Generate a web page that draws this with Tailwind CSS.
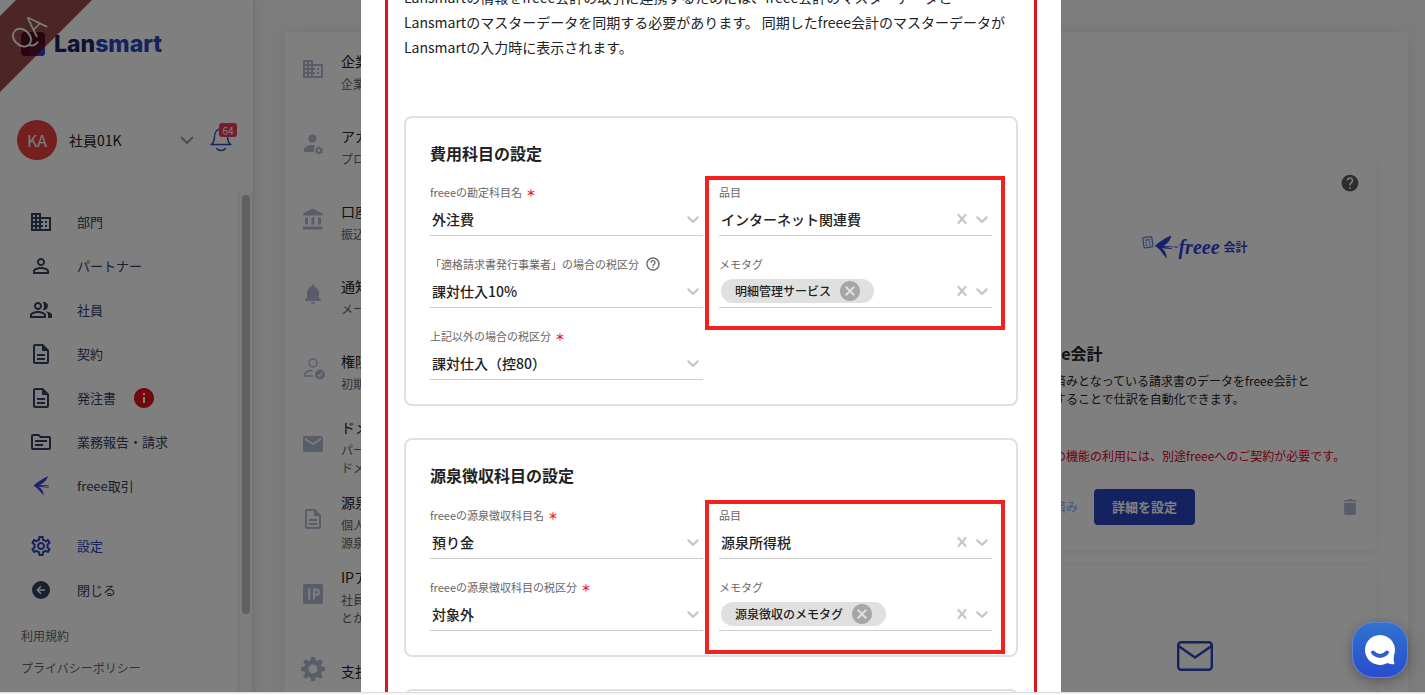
<!DOCTYPE html>
<html lang="ja">
<head>
    <meta charset="UTF-8">
    <meta name="viewport" content="width=device-width, initial-scale=1.0">
    <title>設定 - Lansmart</title>
    <script src="https://cdn.jsdelivr.net/npm/@tailwindcss/browser@4"></script>
</head>
<body class="flex h-screen flex-col overflow-hidden bg-[#f7f7f7] font-['Noto_Sans_CJK_JP',sans-serif] text-[#222]">

    <!-- Icon sprite -->
    <svg class="hidden">
        <symbol id="i-domain" viewBox="0 0 24 24"><path d="M12 7V3H2v18h20V7H12zM6 19H4v-2h2v2zm0-4H4v-2h2v2zm0-4H4V9h2v2zm0-4H4V5h2v2zm4 12H8v-2h2v2zm0-4H8v-2h2v2zm0-4H8V9h2v2zm0-4H8V5h2v2zm10 12h-8v-2h2v-2h-2v-2h2v-2h-2V9h8v10zm-2-8h-2v2h2v-2zm0 4h-2v2h2v-2z"/></symbol>
        <symbol id="i-person" viewBox="0 0 24 24"><path d="M12 5.9c1.16 0 2.1.94 2.1 2.1s-.94 2.1-2.1 2.1S9.9 9.16 9.9 8s.94-2.1 2.1-2.1m0 9c2.97 0 6.1 1.46 6.1 2.1v1.1H5.9V17c0-.64 3.13-2.1 6.1-2.1M12 4C9.79 4 8 5.79 8 8s1.79 4 4 4 4-1.79 4-4-1.79-4-4-4zm0 9c-2.67 0-8 1.34-8 4v3h16v-3c0-2.66-5.33-4-8-4z"/></symbol>
        <symbol id="i-people" viewBox="0 0 24 24"><path d="M16.67 13.13C18.04 14.06 19 15.32 19 17v3h4v-3c0-2.18-3.57-3.47-6.33-3.87zM15 12c2.21 0 4-1.79 4-4s-1.79-4-4-4c-.47 0-.91.1-1.33.24C14.5 5.27 15 6.58 15 8s-.5 2.73-1.33 3.76c.42.14.86.24 1.33.24zM9 12c2.21 0 4-1.79 4-4s-1.79-4-4-4-4 1.79-4 4 1.79 4 4 4zm0-6c1.1 0 2 .9 2 2s-.9 2-2 2-2-.9-2-2 .9-2 2-2zm0 7c-2.67 0-8 1.34-8 4v3h16v-3c0-2.66-5.33-4-8-4zm6 5H3v-.99C3.2 16.29 6.3 15 9 15s5.8 1.29 6 2v1z"/></symbol>
        <symbol id="i-doc" viewBox="0 0 24 24"><path d="M8 16h8v2H8zm0-4h8v2H8zm6-10H6c-1.1 0-2 .9-2 2v16c0 1.1.89 2 1.99 2H18c1.1 0 2-.9 2-2V8l-6-6zm4 18H6V4h7v5h5v11z"/></symbol>
        <symbol id="i-topic" viewBox="0 0 24 24"><path d="M20 6h-8l-2-2H4c-1.1 0-1.99.9-1.99 2L2 18c0 1.1.9 2 2 2h16c1.1 0 2-.9 2-2V8c0-1.1-.9-2-2-2zm0 12H4V6h5.17l2 2H20v10zm-2-6H6v-2h12v2zm-4 4H6v-2h8v2z"/></symbol>
        <symbol id="i-swallow" viewBox="0 0 24 24"><path d="M19 2.300C13 5 8 8.200 4.500 11.700c4 2 6.500 6 10.300 9.800-.3-3.500-1.800-6.500-5-8.700l10 .9v-.6l-8.500-1.300 8.500-.1v-.6l-8.800-.1C14.500 9 18 6.500 19 2.300z"/></symbol>
        <symbol id="i-settings" viewBox="0 0 24 24"><path d="M19.43 12.98c.04-.32.07-.64.07-.98 0-.34-.03-.66-.07-.98l2.11-1.65c.19-.15.24-.42.12-.64l-2-3.460c-.09-.16-.26-.25-.44-.25-.06 0-.12.01-.17.03l-2.490 1c-.52-.4-1.080-.73-1.690-.98l-.38-2.650C14.460 2.180 14.250 2 14 2h-4c-.25 0-.46.18-.49.42l-.38 2.650c-.61.25-1.170.59-1.690.98l-2.490-1c-.06-.02-.12-.03-.18-.03-.17 0-.34.09-.43.25l-2 3.460c-.13.22-.07.49.12.64l2.110 1.650c-.04.32-.07.65-.07.98 0 .33.03.66.07.98l-2.110 1.650c-.19.15-.24.42-.12.64l2 3.460c.09.16.26.25.44.25.06 0 .12-.01.17-.03l2.490-1c.52.4 1.080.73 1.690.98l.38 2.650c.03.24.24.42.49.42h4c.25 0 .46-.18.49-.42l.38-2.650c.61-.25 1.170-.59 1.690-.98l2.490 1c.06.02.12.03.18.03.17 0 .34-.09.43-.25l2-3.460c.12-.22.07-.49-.12-.64l-2.110-1.650zm-1.980-1.710c.04.31.05.52.05.73 0 .21-.02.43-.05.73l-.14 1.130.89.7 1.080.84-.7 1.210-1.270-.51-1.040-.42-.9.68c-.43.32-.84.56-1.250.73l-1.060.43-.16 1.130-.2 1.350h-1.400l-.19-1.350-.16-1.130-1.060-.43c-.43-.18-.83-.41-1.230-.71l-.91-.7-1.060.43-1.270.51-.7-1.210 1.080-.84.89-.7-.14-1.130c-.03-.31-.05-.54-.05-.74s.02-.43.05-.73l.14-1.130-.89-.7-1.080-.84.7-1.210 1.270.51 1.040.42.9-.68c.43-.32.84-.56 1.250-.73l1.060-.43.16-1.130.2-1.350h1.390l.19 1.350.16 1.130 1.060.43c.43.18.83.41 1.230.71l.91.7 1.060-.43 1.270-.51.7 1.210-1.070.85-.89.7.14 1.130zM12 8c-2.210 0-4 1.790-4 4s1.790 4 4 4 4-1.790 4-4-1.790-4-4-4zm0 6c-1.100 0-2-.9-2-2s.9-2 2-2 2 .9 2 2-.9 2-2 2z"/></symbol>
        <symbol id="i-back" viewBox="0 0 24 24"><circle cx="12" cy="12" r="9"/><path d="M16 12H8.500M12 8.300 8.300 12l3.700 3.700" fill="none" stroke="#fff" stroke-width="1.400"/></symbol>
        <symbol id="i-info" viewBox="0 0 24 24"><path d="M12 2C6.480 2 2 6.480 2 12s4.480 10 10 10 10-4.480 10-10S17.520 2 12 2zm1 15h-2v-6h2v6zm0-8h-2V7h2v2z"/></symbol>
        <symbol id="i-help" viewBox="0 0 24 24"><path d="M12 2C6.480 2 2 6.480 2 12s4.480 10 10 10 10-4.480 10-10S17.520 2 12 2zm1 17h-2v-2h2v2zm2.070-7.750l-.9.92C13.450 12.900 13 13.500 13 15h-2v-.5c0-1.100.45-2.100 1.170-2.830l1.240-1.260c.37-.36.59-.86.59-1.410 0-1.100-.9-2-2-2s-2 .9-2 2H8c0-2.210 1.790-4 4-4s4 1.790 4 4c0 .88-.36 1.680-.93 2.250z"/></symbol>
        <symbol id="i-help-o" viewBox="0 0 24 24"><path d="M11 18h2v-2h-2v2zm1-16C6.480 2 2 6.480 2 12s4.480 10 10 10 10-4.480 10-10S17.520 2 12 2zm0 18c-4.410 0-8-3.590-8-8s3.590-8 8-8 8 3.590 8 8-3.590 8-8 8zm0-14c-2.210 0-4 1.790-4 4h2c0-1.100.9-2 2-2s2 .9 2 2c0 2-3 1.750-3 5h2c0-2.250 3-2.500 3-5 0-2.210-1.790-4-4-4z"/></symbol>
        <symbol id="i-person-gear" viewBox="0 0 24 24"><circle cx="11.500" cy="6.500" r="4"/><path d="M14 13.200c-.8-.1-1.700-.2-2.500-.2C7 13 3 15 3 17.500V20h10.200c-.8-2-.6-4.800.8-6.800z"/><g fill="none" stroke="currentColor"><circle cx="18" cy="18.500" r="2.300" stroke-width="1.800"/><path d="M18 14.500v1.200M18 21.300v1.200M14.500 16.500l1.100.6M20.400 19.900l1.100.6M14.500 20.500l1.100-.6M20.400 17.100l1.100-.6" stroke-width="1.800"/></g></symbol>
        <symbol id="i-bank" viewBox="0 0 24 24"><path d="M4 10.500v7h3v-7H4zm6.500 0v7h3v-7h-3zM2 22.500h19.500v-3H2v3zm15-12v7h3v-7h-3zM11.750 1.500 2 6.500v2h19.500v-2l-9.750-5z"/></symbol>
        <symbol id="i-bell" viewBox="0 0 24 24"><path d="M12 22c1.100 0 2-.9 2-2h-4c0 1.100.89 2 2 2zm6-6v-5c0-3.070-1.640-5.640-4.500-6.320V4c0-.83-.67-1.500-1.500-1.500s-1.500.67-1.500 1.500v.68C7.630 5.360 6 7.920 6 11v5l-2 2v1h16v-1l-2-2z"/></symbol>
        <symbol id="i-person-check" viewBox="0 0 24 24"><g fill="none" stroke="currentColor" stroke-width="1.500"><circle cx="12" cy="6" r="4"/><path d="M12.500 19H3.800v-1.500c0-2.300 3.500-4.200 7.700-4.300"/></g><circle cx="19" cy="17.500" r="5"/><path d="m16.700 17.600 1.700 1.700 3-3.600" fill="none" stroke="#fff" stroke-width="1.300"/></symbol>
        <symbol id="i-mail" viewBox="0 0 24 24"><path d="M20 4H4c-1.100 0-1.990.9-1.990 2L2 18c0 1.100.9 2 2 2h16c1.100 0 2-.9 2-2V6c0-1.100-.9-2-2-2zm0 4l-8 5-8-5V6l8 5 8-5v2z"/></symbol>
        <symbol id="i-ip" viewBox="0 0 24 24"><rect x="2" y="2" width="20" height="20" rx="2"/><path d="M8.300 6.500v11M13 17.500v-10h2.200a2.400 2.400 0 0 1 0 5.300H13" fill="none" stroke="#fff" stroke-width="2"/></symbol>
        <symbol id="i-gear" viewBox="0 0 24 24"><path fill-rule="evenodd" d="M10.300 2h3.400l.4 2.700 1.700.7L18 3.800 20.300 6l-1.700 2.200.7 1.700 2.700.4v3.400l-2.700.4-.7 1.700 1.700 2.200-2.300 2.300-2.200-1.700-1.700.7-.4 2.700h-3.400l-.4-2.700-1.700-.7L6 20.300 3.700 18l1.700-2.200-.7-1.700-2.700-.4v-3.400l2.700-.4.7-1.700L3.700 6 6 3.800l2.200 1.600 1.700-.7zM12 8.300a3.700 3.700 0 1 0 0 7.400 3.700 3.700 0 0 0 0-7.400z"/></symbol>
        <symbol id="i-trash" viewBox="0 0 24 24"><path d="M5 19.500c0 1.100.9 2 2 2h10c1.100 0 2-.9 2-2V7H5v12.500zM19.500 3.500h-4L14 2.300h-4L8.500 3.500h-4V5.500h15z"/></symbol>
        <symbol id="i-chevron" viewBox="0 0 20 20"><path d="M4.516 7.548c.436-.446 1.043-.481 1.576 0L10 11.295l3.908-3.747c.533-.481 1.141-.446 1.574 0 .436.445.408 1.197 0 1.615-.406.418-4.695 4.502-4.695 4.502-.217.223-.502.335-.787.335s-.57-.112-.789-.335c0 0-4.287-4.084-4.695-4.502s-.436-1.170 0-1.615z"/></symbol>
        <symbol id="i-cross" viewBox="0 0 20 20"><path d="M14.348 14.849c-.469.469-1.229.469-1.697 0L10 11.819l-2.651 3.029c-.469.469-1.229.469-1.697 0-.469-.469-.469-1.229 0-1.697l2.758-3.150-2.759-3.152c-.469-.469-.469-1.228 0-1.697s1.228-.469 1.697 0L10 8.183l2.651-3.031c.469-.469 1.228-.469 1.697 0s.469 1.229 0 1.697l-2.758 3.152 2.758 3.150c.469.469.469 1.229 0 1.698z"/></symbol>
        <symbol id="i-cancel" viewBox="0 0 24 24"><path d="M12 2C6.470 2 2 6.470 2 12s4.470 10 10 10 10-4.470 10-10S17.530 2 12 2zm5 13.590L15.590 17 12 13.410 8.410 17 7 15.590 10.590 12 7 8.410 8.410 7 12 10.590 15.590 7 17 8.410 13.410 12 17 15.590z"/></symbol>
    </svg>

    <div class="relative flex min-h-0 flex-1 overflow-hidden bg-[#f8f8f8]">

        <!-- Sidebar -->
        <aside class="relative flex w-[253px] shrink-0 flex-col bg-white shadow-[0_0_6px_rgba(0,0,0,0.15)]">
            <div class="flex h-[88px] items-center gap-[9px] pl-[21px]">
                <svg class="size-6" viewBox="0 0 24 24"><rect width="24" height="24" rx="4" fill="#1a2560"/><path d="M6 12h18v8a4 4 0 0 1-4 4H10z" fill="#2846be"/></svg>
                <span class="font-[Inter] text-[23px] leading-6 font-extrabold text-[#2846be]"><span class="text-[#1a2560]">Lan</span>smart</span>
            </div>
            <svg class="absolute top-0 left-0 size-[92px]" viewBox="0 0 92 92">
                <path d="M16 0h76L0 92V16z" fill="#6c0000" fill-opacity=".7"/>
                <text x="35" y="39" transform="rotate(-45 35 39)" text-anchor="middle" class="text-[28px] font-light" fill="#fff">QA</text>
            </svg>

            <div class="flex h-[104px] items-center pl-[17px]">
                <span class="flex size-10 items-center justify-center rounded-full bg-[#e6403c] text-base text-white">KA</span>
                <span class="ml-3 text-sm">社員01K</span>
                <svg class="ml-auto h-2 w-[14px]" viewBox="0 0 14 8" fill="none" stroke="#999" stroke-width="2"><path d="m1 1 6 6 6-6"/></svg>
                <button class="relative mr-[21px] ml-4 h-7 w-[22px]" aria-label="お知らせ">
                    <svg class="size-full" viewBox="0 0 22 28" fill="none" stroke="#2846be" stroke-width="1.400"><path d="M1.500 18.500h19c-2-2-3-3.500-3-7.500 0-5-2.500-8-6.500-8s-6.500 3-6.500 8c0 4-1 5.500-3 7.500zM6.500 22c1.300 3.300 7.700 3.300 9 0"/></svg>
                    <span class="absolute -top-[3px] left-[9px] flex h-[14px] w-[18px] items-center justify-center rounded-[3px] bg-[#e63c55] text-[10px] text-white">64</span>
                </button>
            </div>

            <div class="flex min-h-0 flex-1">
                <nav class="flex-1 pt-2 text-[13px] text-[#33415f]">
                    <a href="#" class="flex h-11 items-center gap-6 pl-[29px]"><svg class="size-6 fill-current"><use href="#i-domain"/></svg>部門</a>
                    <a href="#" class="flex h-11 items-center gap-6 pl-[29px]"><svg class="size-6 fill-current"><use href="#i-person"/></svg>パートナー</a>
                    <a href="#" class="flex h-11 items-center gap-6 pl-[29px]"><svg class="size-6 fill-current"><use href="#i-people"/></svg>社員</a>
                    <a href="#" class="flex h-11 items-center gap-6 pl-[29px]"><svg class="size-6 fill-current"><use href="#i-doc"/></svg>契約</a>
                    <a href="#" class="flex h-11 items-center gap-6 pl-[29px]"><svg class="size-6 fill-current"><use href="#i-doc"/></svg>発注書<svg class="-ml-2 size-6 fill-[#e0101c]"><use href="#i-info"/></svg></a>
                    <a href="#" class="flex h-11 items-center gap-6 pl-[29px]"><svg class="size-6 fill-current"><use href="#i-topic"/></svg>業務報告・請求</a>
                    <a href="#" class="flex h-11 items-center gap-6 pl-[29px]"><svg class="size-6 fill-[#3a46e0]"><use href="#i-swallow"/></svg>freee取引</a>
                    <a href="#" class="mt-4 flex h-11 items-center gap-6 pl-[29px] text-[#2846be]"><svg class="size-6 fill-current"><use href="#i-settings"/></svg>設定</a>
                    <a href="#" class="flex h-11 items-center gap-6 pl-[29px]"><svg class="size-6 fill-current"><use href="#i-back"/></svg>閉じる</a>
                    <div class="mt-2 pl-[21px] text-xs text-[#666]">
                        <a href="#" class="flex h-8 items-center">利用規約</a>
                        <a href="#" class="flex h-8 items-center">プライバシーポリシー</a>
                    </div>
                </nav>
                <!-- Scrollbar -->
                <div class="w-[15px] border-x border-[#e8e8e8] bg-[#fafafa] pt-[3px]">
                    <div class="mx-auto h-[419px] w-2 rounded-full bg-[#c1c1c1]"></div>
                </div>
            </div>
        </aside>

        <!-- Settings page -->
        <main class="flex flex-1 pt-8 pr-[17px] pl-8">
            <div class="flex flex-1 items-start justify-between bg-white shadow-[0_0_12px_rgba(0,0,0,0.06)]">
                <ul class="pt-px pl-4 text-[#aebcd4] [&_h3]:text-sm [&_h3]:leading-6 [&_h3]:text-[#222] [&_li]:flex [&_li]:h-[75px] [&_li]:items-center [&_li]:gap-4 [&_p]:mt-[2px] [&_p]:text-xs [&_p]:leading-[18px] [&_p]:text-[#666] [&_svg]:mb-[3px] [&_svg]:size-6 [&_svg]:fill-current">
                    <li><svg><use href="#i-domain"/></svg><div><h3>企業情報</h3><p>企業情報</p></div></li>
                    <li><svg><use href="#i-person-gear"/></svg><div><h3>アカウント</h3><p>プロフィール</p></div></li>
                    <li><svg><use href="#i-bank"/></svg><div><h3>口座情報</h3><p>振込口座</p></div></li>
                    <li><svg><use href="#i-bell"/></svg><div><h3>通知設定</h3><p>メール通知</p></div></li>
                    <li><svg><use href="#i-person-check"/></svg><div><h3>権限設定</h3><p>初期権限</p></div></li>
                    <li><svg><use href="#i-mail"/></svg><div><h3>ドメイン</h3><p>パートナー<br>ドメイン</p></div></li>
                    <li><svg><use href="#i-doc"/></svg><div><h3>源泉徴収</h3><p>個人<br>源泉徴収</p></div></li>
                    <li><svg><use href="#i-ip"/></svg><div><h3>IPアドレス</h3><p>社員<br>とかの制限</p></div></li>
                    <li><svg class="scale-120"><use href="#i-gear"/></svg><div><h3>支払設定</h3></div></li>
                </ul>

                <section class="mr-8 flex w-[362px] flex-col gap-4 pt-[125px]">
                    <article class="rounded px-4 pt-4 pb-[25px] shadow-[0_1px_8px_rgba(0,0,0,0.08)]">
                        <svg class="ml-auto size-5 fill-[#5a5a5a]"><use href="#i-help"/></svg>
                        <div class="flex h-[108px] items-center justify-center text-[#3040d8]">
                            <svg class="h-6 w-9" viewBox="0 0 36 24" fill="none">
                                <g stroke="#5f80e0" stroke-width="1.200" transform="rotate(-8 6 8)"><rect x="1.500" y="2" width="9" height="10.500" rx="1"/><path d="M3.500 5h5M3.500 7.500h1.500M7 7.500h1.500M3.500 10h1.500M7 10h1.500"/></g>
                                <path d="M29 .5C22 3.500 17 7 13 11c4.500 2 7 7 11.500 12.500.3-4.500-1.300-8-5-10.300l10.500.8v-.7L21.500 12l9.500.2v-.7l-9.500-.4C25.500 8.500 29 5 29 .5z" fill="currentColor"/>
                                <path d="M32 12h4" stroke="currentColor"/>
                            </svg>
                            <span class="font-['Liberation_Serif',serif] text-[20px] leading-6 font-bold italic">freee</span>
                            <span class="ml-1 text-xs font-bold">会計</span>
                        </div>
                        <h2 class="mt-10 text-base leading-6 font-bold">freee会計</h2>
                        <p class="mt-[7px] text-xs leading-[18px]">支払済みとなっている請求書のデータをfreee会計と<br>連携することで仕訳を自動化できます。</p>
                        <p class="mt-[39px] text-xs leading-[18px] text-[#e0001c]">※この機能の利用には、別途freeeへのご契約が必要です。</p>
                        <div class="mt-6 flex items-center">
                            <span class="text-xs text-[#80b0f0]">連携済み</span>
                            <button class="ml-4 h-9 rounded bg-[#2846be] px-[18px] text-[13px] font-bold text-white">詳細を設定</button>
                            <button class="ml-auto" aria-label="削除"><svg class="size-5 fill-[#aebcd4]"><use href="#i-trash"/></svg></button>
                        </div>
                    </article>
                    <article class="h-[393px] rounded pt-[75px] shadow-[0_1px_8px_rgba(0,0,0,0.08)]">
                        <svg class="mx-auto h-[30px] w-9" viewBox="0 0 36 30" fill="none" stroke="#2846be" stroke-width="2.400"><rect x="1.200" y="1.200" width="33.600" height="27.600" rx="3"/><path d="M1.500 5 18 16.500 34.500 5"/></svg>
                    </article>
                </section>
            </div>
        </main>

        <!-- Modal -->
        <div class="absolute inset-0 flex justify-center bg-black/50 pr-[3px]">
            <div role="dialog" aria-modal="true" class="w-[700px] overflow-hidden bg-white px-6">
                <div class="-mt-[15px] border-x-3 border-[#dc1420] px-4">
                    <p class="text-sm leading-[25px]">Lansmartの情報をfreee会計の取引に連携するためには、freee会計のマスターデータと<br>Lansmartのマスターデータを同期する必要があります。 同期したfreee会計のマスターデータが<br>Lansmartの入力時に表示されます。</p>

                    <form class="mt-14 space-y-8">
                        <section class="relative rounded-lg border-2 border-[#e0e0e0] px-6 pt-[23px] pb-6">
                            <h2 class="text-base leading-6 font-bold">費用科目の設定</h2>
                            <div class="mt-[18px] grid grid-cols-2 gap-x-4 gap-y-[19px]">
                                <div>
                                    <label for="account" class="flex h-[18px] items-center text-[11px] text-[#666]">freeeの勘定科目名<span class="ml-1 text-[10px] font-bold text-[#e8202a]">＊</span></label>
                                    <div class="mt-[2px] flex h-[33px] items-center border-b border-[#ccc]">
                                        <select id="account" class="min-w-0 flex-1 appearance-none pb-px pl-[2px] text-sm font-medium"><option>外注費</option></select>
                                        <svg class="size-5 fill-[#c8c8c8]"><use href="#i-chevron"/></svg>
                                    </div>
                                </div>
                                <div>
                                    <label for="item" class="flex h-[18px] items-center text-[11px] text-[#666]">品目</label>
                                    <div class="mt-[2px] flex h-[33px] items-center border-b border-[#ccc]">
                                        <select id="item" class="min-w-0 flex-1 appearance-none pb-px pl-[2px] text-sm font-medium"><option>インターネット関連費</option></select>
                                        <button type="button" aria-label="クリア"><svg class="size-5 fill-[#c8c8c8]"><use href="#i-cross"/></svg></button>
                                        <svg class="size-5 fill-[#c8c8c8]"><use href="#i-chevron"/></svg>
                                    </div>
                                </div>
                                <div>
                                    <label for="tax-qualified" class="flex h-[18px] items-center text-[11px] text-[#666]">「適格請求書発行事業者」の場合の税区分<svg class="ml-[6px] size-4 fill-current"><use href="#i-help-o"/></svg></label>
                                    <div class="mt-[2px] flex h-[33px] items-center border-b border-[#ccc]">
                                        <select id="tax-qualified" class="min-w-0 flex-1 appearance-none pb-px pl-[2px] text-sm font-medium"><option>課対仕入10%</option></select>
                                        <svg class="size-5 fill-[#c8c8c8]"><use href="#i-chevron"/></svg>
                                    </div>
                                </div>
                                <div>
                                    <label for="memo" class="flex h-[18px] items-center text-[11px] text-[#666]">メモタグ</label>
                                    <div class="mt-[2px] flex h-[33px] items-center border-b border-[#ccc] pl-[2px]">
                                        <span class="flex h-6 items-center gap-[7px] rounded-full bg-[#e0e0e0] pr-3 pl-[14px] text-xs font-medium">明細管理サービス<button type="button" aria-label="削除"><svg class="size-6 fill-[#a6a6a6]"><use href="#i-cancel"/></svg></button></span>
                                        <input id="memo" type="text" class="min-w-0 flex-1 outline-none">
                                        <button type="button" aria-label="クリア"><svg class="size-5 fill-[#c8c8c8]"><use href="#i-cross"/></svg></button>
                                        <svg class="size-5 fill-[#c8c8c8]"><use href="#i-chevron"/></svg>
                                    </div>
                                </div>
                                <div>
                                    <label for="tax-other" class="flex h-[18px] items-center text-[11px] text-[#666]">上記以外の場合の税区分<span class="ml-1 text-[10px] font-bold text-[#e8202a]">＊</span></label>
                                    <div class="mt-[2px] flex h-[33px] items-center border-b border-[#ccc]">
                                        <select id="tax-other" class="min-w-0 flex-1 appearance-none pb-px pl-[2px] text-sm font-medium"><option>課対仕入（控80）</option></select>
                                        <svg class="size-5 fill-[#c8c8c8]"><use href="#i-chevron"/></svg>
                                    </div>
                                </div>
                            </div>
                            <div class="pointer-events-none absolute top-[58px] right-[11px] h-[154px] w-[300px] border-4 border-[#f4201d]"></div>
                        </section>

                        <section class="relative rounded-lg border-2 border-[#e0e0e0] px-6 pt-[23px] pb-6">
                            <h2 class="text-base leading-6 font-bold">源泉徴収科目の設定</h2>
                            <div class="mt-[19px] grid grid-cols-2 gap-x-4 gap-y-[19px]">
                                <div>
                                    <label for="wh-account" class="flex h-[18px] items-center text-[11px] text-[#666]">freeeの源泉徴収科目名<span class="ml-1 text-[10px] font-bold text-[#e8202a]">＊</span></label>
                                    <div class="mt-[2px] flex h-[33px] items-center border-b border-[#ccc]">
                                        <select id="wh-account" class="min-w-0 flex-1 appearance-none pb-px pl-[2px] text-sm font-medium"><option>預り金</option></select>
                                        <svg class="size-5 fill-[#c8c8c8]"><use href="#i-chevron"/></svg>
                                    </div>
                                </div>
                                <div>
                                    <label for="wh-item" class="flex h-[18px] items-center text-[11px] text-[#666]">品目</label>
                                    <div class="mt-[2px] flex h-[33px] items-center border-b border-[#ccc]">
                                        <select id="wh-item" class="min-w-0 flex-1 appearance-none pb-px pl-[2px] text-sm font-medium"><option>源泉所得税</option></select>
                                        <button type="button" aria-label="クリア"><svg class="size-5 fill-[#c8c8c8]"><use href="#i-cross"/></svg></button>
                                        <svg class="size-5 fill-[#c8c8c8]"><use href="#i-chevron"/></svg>
                                    </div>
                                </div>
                                <div>
                                    <label for="wh-tax" class="flex h-[18px] items-center text-[11px] text-[#666]">freeeの源泉徴収科目の税区分<span class="ml-1 text-[10px] font-bold text-[#e8202a]">＊</span></label>
                                    <div class="mt-[2px] flex h-[33px] items-center border-b border-[#ccc]">
                                        <select id="wh-tax" class="min-w-0 flex-1 appearance-none pb-px pl-[2px] text-sm font-medium"><option>対象外</option></select>
                                        <svg class="size-5 fill-[#c8c8c8]"><use href="#i-chevron"/></svg>
                                    </div>
                                </div>
                                <div>
                                    <label for="wh-memo" class="flex h-[18px] items-center text-[11px] text-[#666]">メモタグ</label>
                                    <div class="mt-[2px] flex h-[33px] items-center border-b border-[#ccc] pl-[2px]">
                                        <span class="flex h-6 items-center gap-[7px] rounded-full bg-[#e0e0e0] pr-3 pl-[14px] text-xs font-medium">源泉徴収のメモタグ<button type="button" aria-label="削除"><svg class="size-6 fill-[#a6a6a6]"><use href="#i-cancel"/></svg></button></span>
                                        <input id="wh-memo" type="text" class="min-w-0 flex-1 outline-none">
                                        <button type="button" aria-label="クリア"><svg class="size-5 fill-[#c8c8c8]"><use href="#i-cross"/></svg></button>
                                        <svg class="size-5 fill-[#c8c8c8]"><use href="#i-chevron"/></svg>
                                    </div>
                                </div>
                            </div>
                            <div class="pointer-events-none absolute top-[60px] right-[11px] h-[154px] w-[300px] border-4 border-[#f4201d]"></div>
                        </section>

                        <section class="h-40 rounded-lg border-2 border-[#e0e0e0]"></section>
                    </form>
                </div>
            </div>
        </div>
    </div>

    <div class="h-[3px] shrink-0 border-t border-[#ddd]"></div>

    <!-- Chat launcher -->
    <button class="fixed right-[17px] bottom-[17px] flex size-14 items-center justify-center rounded-[22px] border border-[#5b84dc] bg-linear-to-b from-[#3072cf] to-[#2b4bcd] shadow-[0_3px_12px_rgba(0,0,0,0.3)]" aria-label="チャット">
        <svg class="size-[30px]" viewBox="0 0 30 30"><path d="M15 0a15 15 0 1 0 7.500 28c2 1 4.500 1.500 7 1-.8-2-.9-4-.8-6.500l.2-2A15 15 0 0 0 15 0z" fill="#fff"/><path d="M8 17.500c4 4.500 10 4.500 14 0" fill="none" stroke="#2e5ccd" stroke-width="4" stroke-linecap="round"/></svg>
    </button>
</body>
</html>
